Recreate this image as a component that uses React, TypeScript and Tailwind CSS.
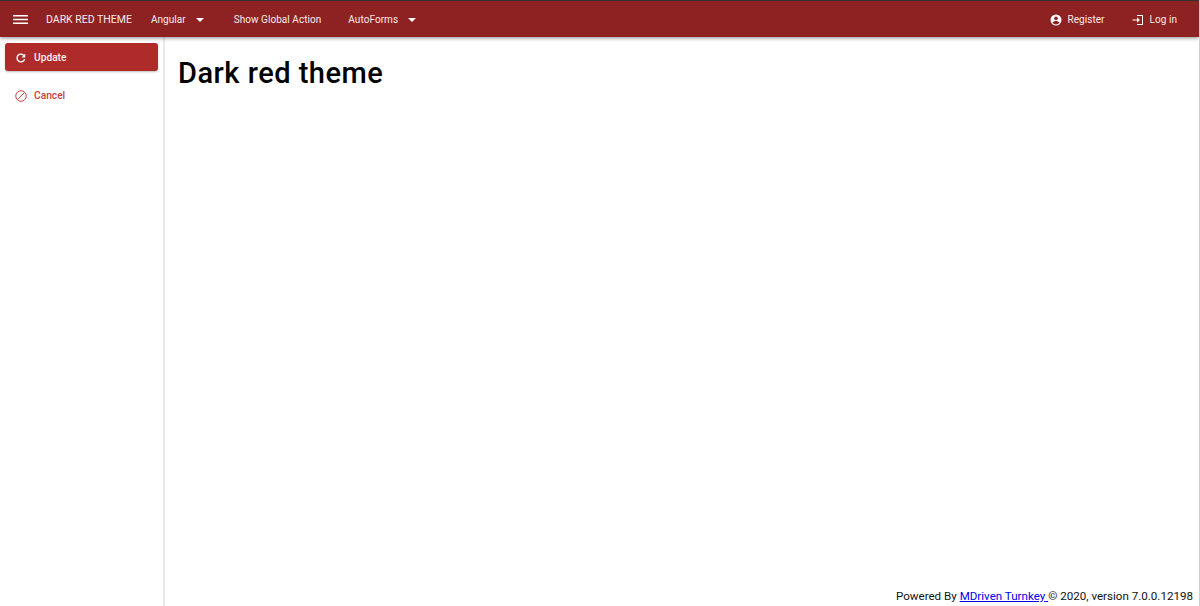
import React from "react";

const Caret = () => (
  <svg width="8" height="4" viewBox="0 0 8 4" className="fill-white">
    <path d="M0 0h8L4 4z" />
  </svg>
);

const Nav = ({ label, caret, className }: { label: string; caret?: boolean; className: string }) => (
  <div className={`flex items-center text-[10px] tracking-[0.05px] text-[#f5eaea] ${className}`}>
    <span>{label}</span>
    {caret && (
      <span className="ml-[10px]">
        <Caret />
      </span>
    )}
  </div>
);

const App = () => {
  return (
    <div className="flex h-screen flex-col overflow-hidden border-r border-[#cfcfcf] bg-white font-['Roboto',sans-serif]">
      <header className="relative z-10 flex h-[37px] shrink-0 items-center border-t border-[#33302f] bg-[#8e2222] pt-px shadow-[0_1px_4px_rgba(0,0,0,0.45)]">
        <svg width="15" height="9" viewBox="0 0 15 9" className="ml-[13px] fill-white">
          <path d="M0 0h15v1.4H0zM0 3.8h15v1.4H0zM0 7.6h15V9H0z" />
        </svg>
        <div className="ml-[18px] text-[10.5px] text-[#f5eaea]">DARK RED THEME</div>
        <Nav label="Angular" caret className="ml-[19px]" />
        <Nav label="Show Global Action" className="ml-[30px]" />
        <Nav label="AutoForms" caret className="ml-[27px]" />
        <div className="ml-auto flex items-center text-[10px] tracking-[0.05px] text-[#f5eaea]">
          <svg width="12" height="12" viewBox="0 0 24 24" className="fill-white">
            <path d="M12 1a11 11 0 1 0 0 22 11 11 0 0 0 0-22zm0 4a3.7 3.7 0 1 1 0 7.4A3.7 3.7 0 0 1 12 5zm0 16a8.6 8.6 0 0 1-6.9-3.6c.1-2.3 4.6-3.5 6.9-3.5s6.8 1.2 6.9 3.5A8.6 8.6 0 0 1 12 21z" />
          </svg>
          <span className="ml-[6px]">Register</span>
          <svg width="12" height="12" viewBox="0 0 24 24" className="ml-[27px] fill-white">
            <path d="M10 2h12v20H10v-2h10V4H10zM1 11h9V6.5l6 5.5-6 5.5V13H1z" />
          </svg>
          <span className="ml-[6px] mr-[22px]">Log in</span>
        </div>
      </header>
      <div className="flex min-h-0 flex-1">
        <aside className="w-[165px] shrink-0 border-r-2 border-[#e9e9e9] pl-[5px] pr-[5px] pt-[6px]">
          <div className="flex h-[28px] w-[153px] items-center rounded-[3px] bg-[#af2b2a] pl-[10px] pt-px text-[10.2px] font-medium text-[#fbeeee] shadow-[0_1px_2px_rgba(0,0,0,0.25)]">
            <svg width="12" height="12" viewBox="0 0 24 24" className="fill-white">
              <path d="M20.5 3.5v7.6h-7.6l3.3-3.3A6.7 6.7 0 0 0 12 5.6a6.4 6.4 0 1 0 6 8.6h2.6A9 9 0 1 1 12 3a9.2 9.2 0 0 1 6 2.4z" />
            </svg>
            <span className="ml-[7px]">Update</span>
          </div>
          <div className="mt-[10px] flex h-[28px] items-center pl-[10px] pt-px text-[10.2px] font-medium text-[#c9403f]">
            <svg width="12" height="12" viewBox="0 0 24 24" fill="none" stroke="#cc4544" strokeWidth="2">
              <circle cx="12" cy="12" r="10.5" />
              <path d="M5 19L19 5" />
            </svg>
            <span className="ml-[7px]">Cancel</span>
          </div>
        </aside>
        <main className="flex min-w-0 flex-1 flex-col pl-[13px]">
          <h1 className="mt-[16px] text-[29px] leading-[40px] font-medium tracking-[0.5px] text-black">Dark red theme</h1>
          <footer className="mt-auto pr-[6px] text-right text-[11.6px] leading-[20px] text-[#111]">
            Powered By{" "}
            <a href="#" className="text-[#0000ee] underline">
              MDriven Turnkey{" "}
            </a>
            © 2020, version 7.0.0.12198
          </footer>
        </main>
      </div>
    </div>
  );
};

export default App;
